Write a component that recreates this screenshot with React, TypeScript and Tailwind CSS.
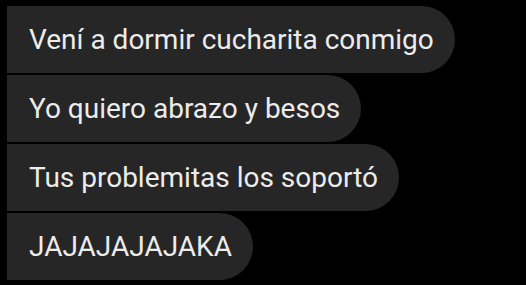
const messages = [
  { text: "Vení a dormir cucharita conmigo", corners: "rounded-tl-[24px] rounded-bl-[6px]" },
  { text: "Yo quiero abrazo y besos", corners: "rounded-tl-[6px] rounded-bl-[6px]" },
  { text: "Tus problemitas los soportó", corners: "rounded-tl-[6px] rounded-bl-[6px]" },
  { text: "JAJAJAJAJAKA", corners: "rounded-tl-[6px] rounded-bl-[24px]" },
];

export default function App() {
  return (
    <div className="w-[526px] h-[285px] bg-black overflow-hidden pt-[6px] pl-[7px] font-['Roboto',sans-serif]">
      <div className="flex flex-col items-start gap-[2px]">
        {messages.map((m) => (
          <div
            key={m.text}
            className={`h-[67px] flex items-center pl-[22px] pr-[21px] bg-[#262626] text-[#ececec] text-[28px] rounded-r-full ${m.corners}`}
          >
            {m.text}
          </div>
        ))}
      </div>
    </div>
  );
}
